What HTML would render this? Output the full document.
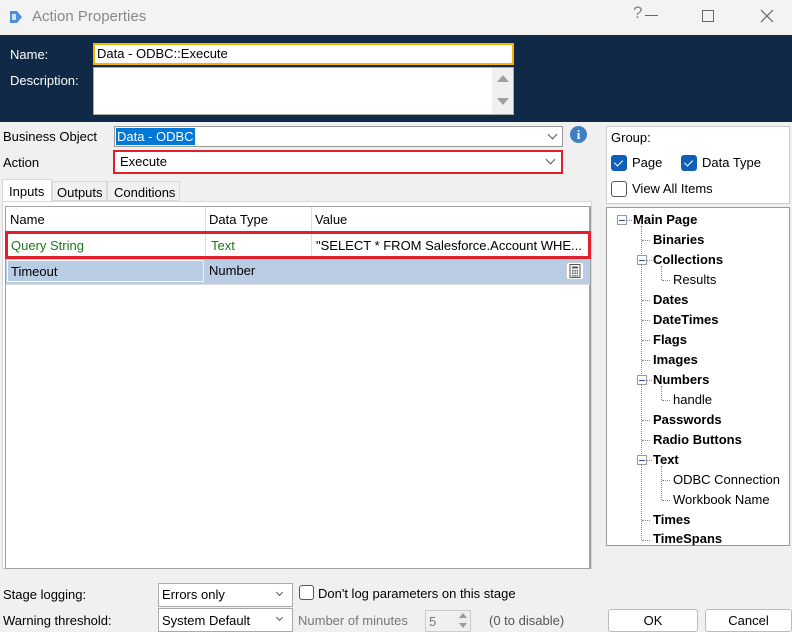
<!DOCTYPE html>
<html><head><meta charset="utf-8"><style>
*{box-sizing:border-box;margin:0;padding:0}
body{width:792px;height:632px;background:#f0f0f0;font-family:"Liberation Sans",sans-serif;font-size:13px;color:#000;position:relative;overflow:hidden}
.a{position:absolute;white-space:nowrap}
.chev{position:absolute;width:7px;height:7px;border-right:1px solid #555;border-bottom:1px solid #555;transform:rotate(45deg)}
.cb{position:absolute;width:16px;height:16px;border-radius:3px;background:#0f5fb8}
.cb::after{content:"";position:absolute;left:5px;top:3px;width:4px;height:7px;border-right:1.5px solid #fff;border-bottom:1.5px solid #fff;transform:rotate(45deg)}
.t{position:absolute;font-size:13px;white-space:nowrap;line-height:16px}
.b{font-weight:bold}
.pm{position:absolute;width:10px;height:10px;border:1px solid #999;background:#fff}
.pm::after{content:"";position:absolute;left:1px;top:4px;width:6px;height:1px;background:#2a4a8a}
.hd{position:absolute;border-top:1px dotted #888;width:8px}
.vd{position:absolute;border-left:1px dotted #888}
</style></head><body>
<div class="a" style="left:0;top:0;width:792px;height:35px;background:#f3f3f3"></div>
<svg class="a" style="left:8px;top:9px" width="16" height="16"><path d="M2 2h7l5 6-5 6H2z" fill="#4a8fd8"/><rect x="4" y="5" width="4" height="6" fill="#cfe3f7"/></svg>
<div class="a" style="left:32px;top:8px;font-size:15px;color:#888">Action Properties</div>
<div class="a" style="left:633px;top:3px;font-size:17px;color:#888">?</div>
<div class="a" style="left:645px;top:15px;width:13px;height:1px;background:#666"></div>
<div class="a" style="left:702px;top:10px;width:12px;height:12px;border:1px solid #666"></div>
<svg class="a" style="left:760px;top:9px" width="14" height="14"><path d="M1 1L13 13M13 1L1 13" stroke="#666" stroke-width="1.2"/></svg>

<div class="a" style="left:0;top:35px;width:792px;height:87px;background:#0f2946"></div>
<div class="a" style="left:10px;top:47px;color:#fff">Name:</div>
<div class="a" style="left:10px;top:73px;color:#fff">Description:</div>
<div class="a" style="left:93px;top:43px;width:421px;height:22px;background:#fff;border:2px solid #f2b400;padding-left:2px;line-height:18px">Data - ODBC::Execute</div>
<div class="a" style="left:93px;top:67px;width:421px;height:48px;background:#fff;border:1px solid #aaa"></div>
<div class="a" style="left:492px;top:68px;width:21px;height:46px;background:#f0f0f0"></div>
<div class="a" style="left:497px;top:75px;border:6px solid transparent;border-bottom:7px solid #a0a0a0;border-top:0"></div>
<div class="a" style="left:497px;top:98px;border:6px solid transparent;border-top:7px solid #a0a0a0;border-bottom:0"></div>

<div class="a" style="left:3px;top:129px">Business Object</div>
<div class="a" style="left:3px;top:155px">Action</div>
<div class="a" style="left:114px;top:126px;width:449px;height:21px;background:#fff;border:1px solid #999"></div>
<div class="a" style="left:116px;top:128px;background:#0078d7;color:#fff;padding:0 1px;line-height:17px">Data - ODBC</div>
<div class="chev" style="left:549px;top:131px"></div>
<div class="a" style="left:113px;top:150px;width:450px;height:24px;background:#fff;border:2px solid #e0202a;padding-left:5px;line-height:20px">Execute</div>
<div class="chev" style="left:547px;top:156px"></div>
<div class="a" style="left:570px;top:126px;width:17px;height:17px;border-radius:50%;background:#3f7fc4;color:#fff;font-weight:bold;font-family:'Liberation Serif',serif;font-size:13px;text-align:center;line-height:17px">i</div>

<div class="a" style="left:2px;top:179px;width:50px;height:23px;background:#fff;border:1px solid #d9d9d9;border-bottom:none;padding:4px 0 0 6px">Inputs</div>
<div class="a" style="left:52px;top:181px;width:55px;height:20px;border:1px solid #d9d9d9;padding:3px 0 0 4px">Outputs</div>
<div class="a" style="left:107px;top:181px;width:73px;height:20px;border:1px solid #d9d9d9;padding:3px 0 0 6px">Conditions</div>
<div class="a" style="left:2px;top:201px;width:590px;height:368px;background:#fff;border:1px solid #d9d9d9"></div>
<div class="a" style="left:5px;top:206px;width:586px;height:363px;background:#fff;border:1px solid #a0a0a0;border-right:2px solid #a0a0a0"></div>
<div class="a" style="left:6px;top:231px;width:584px;height:1px;background:#ddd"></div>
<div class="a" style="left:205px;top:207px;width:1px;height:77px;background:#ddd"></div>
<div class="a" style="left:311px;top:207px;width:1px;height:77px;background:#ddd"></div>
<div class="a" style="left:10px;top:212px">Name</div>
<div class="a" style="left:209px;top:212px">Data Type</div>
<div class="a" style="left:315px;top:212px">Value</div>
<div class="a" style="left:6px;top:258px;width:584px;height:26px;background:#b8cce4"></div>
<div class="a" style="left:7px;top:260px;width:197px;height:22px;border:1px solid #fff;border-right-color:#e6eef8"></div>
<div class="a" style="left:6px;top:284px;width:584px;height:1px;background:#ddd"></div>
<div class="a" style="left:5px;top:231px;width:586px;height:28px;border:3px solid #e0202a"></div>
<div class="a" style="left:11px;top:238px;color:#1a7a1a">Query String</div>
<div class="a" style="left:211px;top:238px;color:#1a7a1a">Text</div>
<div class="a" style="left:316px;top:238px">"SELECT * FROM Salesforce.Account WHE...</div>
<div class="a" style="left:11px;top:264px">Timeout</div>
<div class="a" style="left:209px;top:263px">Number</div>
<div class="a" style="left:566px;top:262px;width:18px;height:18px;background:#fff;border:1px solid #ccc;border-radius:3px"></div>
<svg class="a" style="left:569px;top:264px" width="12" height="14"><rect x="1" y="0.5" width="10" height="13" fill="none" stroke="#555"/><rect x="3" y="2.5" width="6" height="2" fill="#555"/><g fill="#555"><rect x="3" y="6" width="1.5" height="1.5"/><rect x="5.3" y="6" width="1.5" height="1.5"/><rect x="7.6" y="6" width="1.5" height="1.5"/><rect x="3" y="8.5" width="1.5" height="1.5"/><rect x="5.3" y="8.5" width="1.5" height="1.5"/><rect x="7.6" y="8.5" width="1.5" height="1.5"/><rect x="3" y="11" width="1.5" height="1.5"/><rect x="5.3" y="11" width="1.5" height="1.5"/><rect x="7.6" y="11" width="1.5" height="1.5"/></g></svg>

<div class="a" style="left:606px;top:126px;width:184px;height:78px;background:#fff;border:1px solid #ccc"></div>
<div class="a" style="left:611px;top:130px">Group:</div>
<div class="cb" style="left:611px;top:155px"></div><div class="a" style="left:632px;top:155px">Page</div>
<div class="cb" style="left:681px;top:155px"></div><div class="a" style="left:702px;top:155px">Data Type</div>
<div class="a" style="left:611px;top:181px;width:16px;height:16px;border:1px solid #555;border-radius:3px;background:#fff"></div>
<div class="a" style="left:632px;top:181px">View All Items</div>

<div class="a" style="left:606px;top:207px;width:184px;height:339px;background:#fff;border:1px solid #999"></div>
<div class="vd" style="left:641px;top:226px;height:314px"></div>
<div class="vd" style="left:661px;top:266px;height:14px"></div>
<div class="vd" style="left:661px;top:386px;height:14px"></div>
<div class="vd" style="left:661px;top:466px;height:34px"></div>
<div class="pm" style="left:617px;top:215px"></div><div class="hd" style="left:627px;top:220px;width:5px"></div>
<div class="t b" style="left:633px;top:212px">Main Page</div>
<div class="hd" style="left:642px;top:240px"></div><div class="t b" style="left:653px;top:232px">Binaries</div>
<div class="pm" style="left:637px;top:255px"></div><div class="hd" style="left:647px;top:260px;width:5px"></div><div class="t b" style="left:653px;top:252px">Collections</div>
<div class="hd" style="left:662px;top:280px"></div><div class="t" style="left:673px;top:272px">Results</div>
<div class="hd" style="left:642px;top:300px"></div><div class="t b" style="left:653px;top:292px">Dates</div>
<div class="hd" style="left:642px;top:320px"></div><div class="t b" style="left:653px;top:312px">DateTimes</div>
<div class="hd" style="left:642px;top:340px"></div><div class="t b" style="left:653px;top:332px">Flags</div>
<div class="hd" style="left:642px;top:360px"></div><div class="t b" style="left:653px;top:352px">Images</div>
<div class="pm" style="left:637px;top:375px"></div><div class="hd" style="left:647px;top:380px;width:5px"></div><div class="t b" style="left:653px;top:372px">Numbers</div>
<div class="hd" style="left:662px;top:400px"></div><div class="t" style="left:673px;top:392px">handle</div>
<div class="hd" style="left:642px;top:420px"></div><div class="t b" style="left:653px;top:412px">Passwords</div>
<div class="hd" style="left:642px;top:440px"></div><div class="t b" style="left:653px;top:432px">Radio Buttons</div>
<div class="pm" style="left:637px;top:455px"></div><div class="hd" style="left:647px;top:460px;width:5px"></div><div class="t b" style="left:653px;top:452px">Text</div>
<div class="hd" style="left:662px;top:480px"></div><div class="t" style="left:673px;top:472px">ODBC Connection</div>
<div class="hd" style="left:662px;top:500px"></div><div class="t" style="left:673px;top:492px">Workbook Name</div>
<div class="hd" style="left:642px;top:520px"></div><div class="t b" style="left:653px;top:512px">Times</div>
<div class="hd" style="left:642px;top:540px"></div><div class="t b" style="left:653px;top:531px">TimeSpans</div>

<div class="a" style="left:3px;top:587px">Stage logging:</div>
<div class="a" style="left:3px;top:613px">Warning threshold:</div>
<div class="a" style="left:158px;top:583px;width:135px;height:24px;background:#fff;border:1px solid #aaa;padding:3px 0 0 3px">Errors only</div>
<div class="chev" style="left:277px;top:590px;width:5px;height:5px"></div>
<div class="a" style="left:299px;top:585px;width:15px;height:15px;border:1px solid #555;border-radius:3px;background:#fff"></div>
<div class="a" style="left:318px;top:586px">Don't log parameters on this stage</div>
<div class="a" style="left:158px;top:608px;width:135px;height:24px;background:#fff;border:1px solid #aaa;padding:4px 0 0 3px">System Default</div>
<div class="chev" style="left:277px;top:615px;width:5px;height:5px"></div>
<div class="a" style="left:298px;top:613px;color:#777">Number of minutes</div>
<div class="a" style="left:425px;top:610px;width:46px;height:22px;border:1px solid #ccc;padding:3px 0 0 3px;color:#777">5</div>
<div class="a" style="left:456px;top:612px;width:14px;height:18px;background:#eee"></div>
<div class="a" style="left:459px;top:613px;border:4px solid transparent;border-bottom:5px solid #999;border-top:0"></div>
<div class="a" style="left:459px;top:623px;border:4px solid transparent;border-top:5px solid #999;border-bottom:0"></div>
<div class="a" style="left:489px;top:613px;color:#555">(0 to disable)</div>
<div class="a" style="left:608px;top:609px;width:90px;height:23px;background:#fff;border:1px solid #bbb;border-radius:3px;text-align:center;line-height:21px">OK</div>
<div class="a" style="left:705px;top:609px;width:87px;height:23px;background:#fff;border:1px solid #bbb;border-radius:3px;text-align:center;line-height:21px">Cancel</div>
</body></html>
